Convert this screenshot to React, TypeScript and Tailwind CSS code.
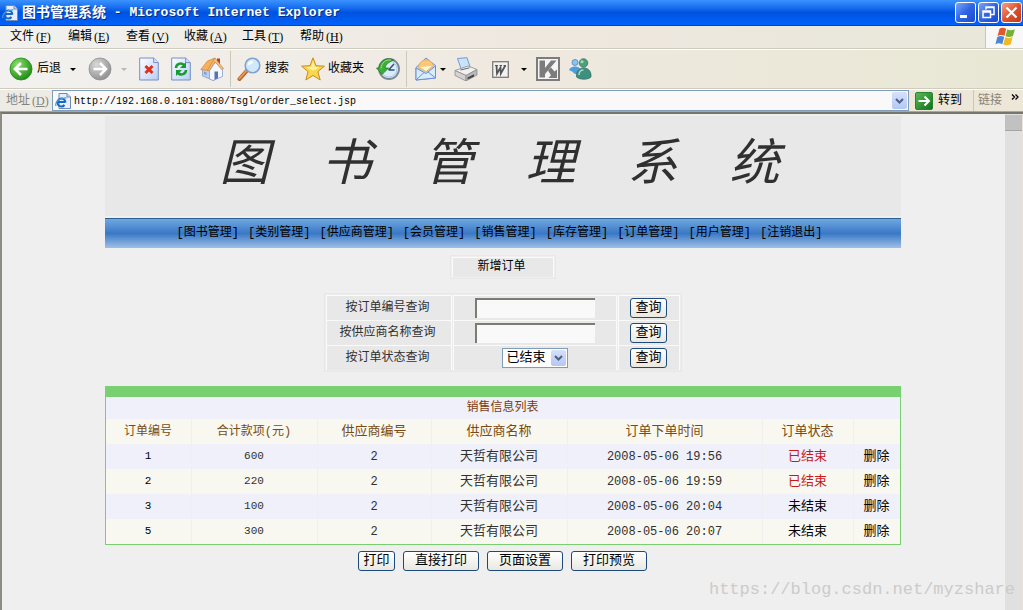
import type { ReactNode } from "react"

const MENUS = [
  ["文件", "F"],
  ["编辑", "E"],
  ["查看", "V"],
  ["收藏", "A"],
  ["工具", "T"],
  ["帮助", "H"],
]

const NAV = [
  "图书管理",
  "类别管理",
  "供应商管理",
  "会员管理",
  "销售管理",
  "库存管理",
  "订单管理",
  "用户管理",
  "注销退出",
]

type Order = {
  id: number
  total: number
  supplierId: number
  supplier: string
  time: string
  closed: boolean
}

const ORDERS: Order[] = [
  { id: 1, total: 600, supplierId: 2, supplier: "天哲有限公司", time: "2008-05-06 19:56", closed: true },
  { id: 2, total: 220, supplierId: 2, supplier: "天哲有限公司", time: "2008-05-06 19:59", closed: true },
  { id: 3, total: 100, supplierId: 2, supplier: "天哲有限公司", time: "2008-05-06 20:04", closed: false },
  { id: 5, total: 300, supplierId: 2, supplier: "天哲有限公司", time: "2008-05-06 20:07", closed: false },
]

export default function App() {
  return (
    <div className="min-h-screen flex flex-col bg-[#efefef] text-black text-xs font-['Liberation_Mono','Noto_Sans_CJK_SC',monospace]">
      <TitleBar />
      <MenuBar />
      <Toolbar />
      <AddressBar />
      <div className="flex-1 flex border-t-2 border-l-2 border-t-[#77756c] border-l-[#8d8b82]">
        <OrderPage />
        <div className="w-[17px] bg-[#e0e0e0]">
          <div className="h-4 mt-px bg-[#c1c1c1] border-b border-[#a5a5a5]" />
        </div>
        <div className="w-px bg-[#e9e2da]" />
      </div>
      <div className="absolute right-2 bottom-2 text-[17px] leading-6 text-[#cbcbcb]">
        https://blog.csdn.net/myzshare
      </div>
    </div>
  )
}

function TitleBar() {
  return (
    <header className="h-[26px] flex items-center pl-[2px] pr-px bg-linear-to-b from-[#3a93ff] via-[#0053e1] to-[#0062fb] border-b border-[#0a3fc0] text-white">
      <PageIcon />
      <h1 className="ml-1 flex-1 flex items-center font-bold text-[13px] whitespace-pre [text-shadow:1px_1px_0_#0a2a80]">
        <span className="text-sm">图书管理系统</span> - Microsoft Internet Explorer
      </h1>
      <div className="flex gap-[2px]">
        <WindowButton label="最小化">
          <path d="M4 13.500h7" stroke="#fff" strokeWidth="3" />
        </WindowButton>
        <WindowButton label="还原">
          <path d="M7 6.500V4h8v7.500h-3M7 4.500h8" fill="none" stroke="#fff" strokeWidth="1.500" />
          <path d="M4 8h7.500v6.500H4zM4 9h7.500" fill="none" stroke="#fff" strokeWidth="1.500" />
        </WindowButton>
        <WindowButton label="关闭" danger>
          <path d="M4.500 4.500l10 10M14.500 4.500l-10 10" stroke="#fff" strokeWidth="2.200" />
        </WindowButton>
      </div>
    </header>
  )
}

function WindowButton({ label, danger, children }: { label: string; danger?: boolean; children: ReactNode }) {
  const color = danger
    ? "bg-linear-to-br from-[#f0a088] via-[#e0532f] to-[#c03a14]"
    : "bg-linear-to-br from-[#7ba4f8] via-[#2f63e4] to-[#1c4bd0]"
  return (
    <button aria-label={label} className={`size-[21px] rounded-[3px] border border-white ${color}`}>
      <svg viewBox="0 0 19 19" className="size-[19px]">
        {children}
      </svg>
    </button>
  )
}

function MenuBar() {
  return (
    <nav className="h-[23px] flex bg-linear-to-r from-[#f1f1ee] via-[#efe8e0] to-[#e8e7da] border-b border-[#cfccbf]">
      <div className="flex-1 flex items-center pl-[10px]">
        {MENUS.map(([name, key]) => (
          <button key={key} className="w-[58px] flex items-center gap-[2px]">
            {name}
            <Hotkey letter={key} />
          </button>
        ))}
      </div>
      <div className="w-[38px] flex justify-center items-center bg-[#f8f8f8] border-l border-[#c9c7ba]">
        <WindowsFlag />
      </div>
    </nav>
  )
}

function Hotkey({ letter }: { letter: string }) {
  return (
    <span className="font-['Liberation_Serif',serif]">
      (<u>{letter}</u>)
    </span>
  )
}

function Toolbar() {
  return (
    <div className="h-10 flex items-center pl-[9px] bg-linear-to-r from-[#f2f1ef] via-[#efe9e0] to-[#e8e7d4] border-t border-t-white border-b border-b-[#cfccbf]">
      <button className="flex items-center gap-1">
        <ArrowCircle id="back" from="#8be06a" to="#1f8a16" />
        后退
      </button>
      <Caret className="ml-[9px] fill-black" />
      <button aria-label="前进" className="ml-3">
        <ArrowCircle id="forward" from="#d9d9d9" to="#8f8f8f" flip />
      </button>
      <Caret className="ml-[9px] fill-[#b8b8b8]" />
      <button aria-label="停止" className="ml-3">
        <Sheet id="stop">
          <path d="M6.500 9l7 7M13.500 9l-7 7" stroke="#e0301a" strokeWidth="3" />
        </Sheet>
      </button>
      <button aria-label="刷新" className="ml-3">
        <Sheet id="refresh">
          <path d="M5 11c0-4 5-6 8-3" fill="none" stroke="#189b30" strokeWidth="2.500" />
          <path d="M15 5v6H9z" fill="#189b30" />
          <path d="M15 13c0 4-5 6-8 3" fill="none" stroke="#189b30" strokeWidth="2.500" />
          <path d="M5 19v-6h6z" fill="#189b30" />
        </Sheet>
      </button>
      <button aria-label="主页" className="ml-[9px]">
        <HomeIcon />
      </button>
      <Divider className="ml-[6px]" />
      <button className="ml-[6px] flex items-center gap-1">
        <SearchIcon />
        搜索
      </button>
      <button className="ml-3 flex items-center gap-[3px]">
        <StarIcon />
        收藏夹
      </button>
      <button aria-label="历史" className="ml-3">
        <HistoryIcon />
      </button>
      <Divider className="ml-[6px]" />
      <button aria-label="邮件" className="ml-2">
        <MailIcon />
      </button>
      <Caret className="ml-[3px] fill-black" />
      <button aria-label="打印" className="ml-2">
        <PrinterIcon />
      </button>
      <button aria-label="编辑" className="ml-[14px]">
        <WordIcon />
      </button>
      <Caret className="ml-3 fill-black" />
      <button aria-label="卡巴斯基" className="ml-[9px]">
        <KasperskyIcon />
      </button>
      <button aria-label="Messenger" className="ml-2">
        <MessengerIcon />
      </button>
    </div>
  )
}

function AddressBar() {
  return (
    <div className="h-[23px] flex items-center pl-[6px] bg-linear-to-r from-[#ecebe6] to-[#ede7d8] border-t border-t-white border-b border-b-[#aaa89d]">
      <label htmlFor="address" className="w-[46px] flex items-center gap-[2px] text-[#85837a]">
        地址
        <Hotkey letter="D" />
      </label>
      <div className="flex-1 h-[21px] flex items-center pl-[2px] pr-px bg-[#f9f9f9] border border-[#7f9db9]">
        <PageIcon />
        <input
          id="address"
          defaultValue="http://192.168.0.101:8080/Tsgl/order_select.jsp"
          className="ml-[3px] pt-[2px] flex-1 min-w-0 bg-transparent text-[10px] outline-none"
        />
        <button aria-label="地址列表" className="w-[15px] h-[17px] flex items-center justify-center rounded-xs bg-linear-to-b from-[#d6e0fa] to-[#b4c7f4]">
          <Chevron />
        </button>
      </div>
      <button className="ml-[6px] flex items-center gap-[5px]">
        <svg viewBox="0 0 18 18" className="size-[18px]">
          <defs>
            <linearGradient id="go" x2="1" y2="1">
              <stop stopColor="#5fb95a" />
              <stop offset="1" stopColor="#0d7216" />
            </linearGradient>
          </defs>
          <rect x=".5" y=".5" width="17" height="17" rx="1.500" fill="url(#go)" stroke="#26852a" />
          <path d="M3.500 9h10M9.500 4.500L14 9l-4.500 4.500" fill="none" stroke="#fff" strokeWidth="2" />
        </svg>
        转到
      </button>
      <div className="ml-[11px] h-full w-[50px] flex items-center pl-1 border-l border-[#c9c7ba] text-[#85837a]">
        链接
        <svg viewBox="0 0 8 6" className="ml-[9px] mb-2 w-2 h-[6px]">
          <path d="M1 .5L3.500 3 1 5.500M4.500 .5L7 3 4.500 5.500" fill="none" stroke="#000" strokeWidth="1.300" />
        </svg>
      </div>
    </div>
  )
}

function OrderPage() {
  return (
    <main className="flex-1 pl-4 pr-[18px] pt-[2px] pb-8 flex flex-col items-center">
      <div className="w-full max-w-[796px]">
        <h2 className="h-[100px] pt-[2px] pr-[6px] flex items-center justify-center gap-[52px] bg-[#e8e8e8] text-[50px] leading-none font-normal italic text-[#303030]">
          {[..."图书管理系统"].map((char) => (
            <span key={char}>{char}</span>
          ))}
        </h2>
        <nav className="mt-[2px] h-[30px] pr-[6px] pb-[2px] flex items-center justify-center gap-[9px] border-t border-[#2c5f96] bg-linear-to-b from-[#6fa8df] via-[#3a78c6] to-[#9fc0e4]">
          {NAV.map((item) => (
            <a key={item} href="#">
              [{item}]
            </a>
          ))}
        </nav>
      </div>

      <div className="mt-[7px] w-[106px] h-6 p-px border border-[#e8e8e8]">
        <a href="#" className="h-full pr-[2px] pb-[2px] flex items-center justify-center border border-b-0 border-[#fafafa] bg-[#e8e8e8]">
          新增订单
        </a>
      </div>

      <div className="mt-[14px] w-[358px] p-px border border-[#e8e8e8] bg-[#ececec] text-[#303030]">
        <SearchRow id="order-id" label="按订单编号查询">
          <input id="order-id" className={FIELD} />
        </SearchRow>
        <SearchRow id="supplier" label="按供应商名称查询">
          <input id="supplier" className={FIELD} />
        </SearchRow>
        <SearchRow id="status" label="按订单状态查询">
          <div className="relative flex">
            <select id="status" className="appearance-none w-[66px] h-5 pl-1 bg-white border border-[#7f9db9] text-[13px] leading-4 text-black outline-none">
              <option>已结束</option>
              <option>未结束</option>
            </select>
            <span className="absolute right-[2px] top-[2px] w-[15px] h-4 flex items-center justify-center rounded-xs bg-linear-to-b from-[#d6e0fa] to-[#b4c7f4] pointer-events-none">
              <Chevron />
            </span>
          </div>
        </SearchRow>
      </div>

      <table className="mt-[14px] w-full max-w-[796px] table-fixed border-separate border-spacing-0 border border-t-[11px] border-[#78d070] text-center text-[13px] text-[#303030]">
        <colgroup>
          <col className="w-[86px]" />
          <col className="w-[126px]" />
          <col className="w-[114px]" />
          <col className="w-[136px]" />
          <col className="w-[195px]" />
          <col className="w-[91px]" />
          <col />
        </colgroup>
        <thead className="text-[#7a4a12]">
          <tr className="h-[22px] bg-[#eff0f9]">
            <th colSpan={7} className="p-0 text-xs font-normal text-[#7b3c12]">
              销售信息列表
            </th>
          </tr>
          <tr className="h-[25px] bg-[#f8f8f0]">
            <Head small>订单编号</Head>
            <Head small>合计款项(元)</Head>
            <Head>供应商编号</Head>
            <Head>供应商名称</Head>
            <Head>订单下单时间</Head>
            <Head>订单状态</Head>
            <td />
          </tr>
        </thead>
        <tbody>
          {ORDERS.map((order) => (
            <tr key={order.id} className="h-[25px] odd:bg-[#eff0f9] even:bg-[#f8f8f0]">
              <td className={`${CELL} text-[11px] text-black`}>{order.id}</td>
              <td className={`${CELL} text-[11px]`}>{order.total}</td>
              <td className={`${CELL} text-xs`}>{order.supplierId}</td>
              <td className={CELL}>{order.supplier}</td>
              <td className={`${CELL} text-xs`}>{order.time}</td>
              <td className={`${CELL} ${order.closed ? "text-[#c81818]" : "text-black"}`}>
                {order.closed ? "已结束" : "未结束"}
              </td>
              <td className="p-0 text-black">
                <a href="#">删除</a>
              </td>
            </tr>
          ))}
        </tbody>
      </table>

      <div className="mt-[6px] flex gap-2">
        <XpButton>打印</XpButton>
        <XpButton wide>直接打印</XpButton>
        <XpButton wide>页面设置</XpButton>
        <XpButton wide>打印预览</XpButton>
      </div>
    </main>
  )
}

const FIELD =
  "w-[120px] h-5 px-1 bg-[#f9f9f9] border-t-2 border-l-2 border-[#7d7b73] text-black outline-none"

const CELL = "p-0 border-r border-[#efeff0]"

const SEARCH_CELL = "flex items-center justify-center bg-[#e8e8e8] border border-b-0 border-[#fafafa]"

function SearchRow({ id, label, children }: { id: string; label: string; children: ReactNode }) {
  return (
    <div className="h-[25px] flex gap-px">
      <label htmlFor={id} className={`${SEARCH_CELL} w-[126px] pr-[2px]`}>
        {label}
      </label>
      <div className={`${SEARCH_CELL} flex-1`}>{children}</div>
      <div className={`${SEARCH_CELL} w-[62px]`}>
        <XpButton>查询</XpButton>
      </div>
    </div>
  )
}

function Head({ small, children }: { small?: boolean; children: ReactNode }) {
  return <th className={`${CELL} font-normal ${small ? "text-xs" : ""}`}>{children}</th>
}

function XpButton({ wide, children }: { wide?: boolean; children: ReactNode }) {
  return (
    <button
      className={`${wide ? "w-[76px]" : "w-[37px]"} h-5 flex items-center justify-center rounded-[3px] border border-[#1d4a7a] bg-linear-to-b from-white to-[#e9e8e0] text-[13px] leading-4 text-black`}
    >
      {children}
    </button>
  )
}

function Divider({ className }: { className: string }) {
  return <div className={`w-px h-9 bg-[#cdc8b8] ${className}`} />
}

function Caret({ className }: { className: string }) {
  return (
    <svg viewBox="0 0 6 3" className={`w-[6px] h-[3px] ${className}`}>
      <path d="M0 0h6L3 3z" />
    </svg>
  )
}

function Chevron() {
  return (
    <svg viewBox="0 0 9 6" className="w-[9px] h-[6px]">
      <path d="M1 1l3.500 3.500L8 1" fill="none" stroke="#4d6185" strokeWidth="2" />
    </svg>
  )
}

function PageIcon() {
  return (
    <svg viewBox="0 0 16 16" className="size-4">
      <path d="M4 .5h8L15.500 4v11.500H4z" fill="#e6edfb" stroke="#6f88ba" />
      <path d="M12 .5V4h3.500" fill="#c9d5ee" stroke="#6f88ba" />
      <path d="M3 9h7.500M10.400 9.500A4 4 0 1 0 9.500 12" fill="none" stroke="#1668c8" strokeWidth="2" />
      <path d="M1 13C-.5 9 5 4.500 11.500 4.800" fill="none" stroke="#3f9be6" strokeWidth="1.200" />
    </svg>
  )
}

function WindowsFlag() {
  return (
    <svg viewBox="0 0 20 20" className="size-[22px]">
      <path d="M5 2.500c2-1.200 3.800-1 6 .1L9.500 9C7.500 8 5.500 8 3.200 9z" fill="#e2582c" />
      <path d="M12 3.200c2.500 1 4.500.9 7-.3L17.200 9c-2.300 1.200-4.400 1.200-6.700.3z" fill="#74b230" />
      <path d="M3 10c2.200-1.200 4.300-1 6.300 0l-1.800 6.500c-2-1.200-4-1.200-6.200 0z" fill="#4a86d8" />
      <path d="M10.200 10.300c2.400 1 4.500 1 6.700-.2l-1.700 6.400c-2.300 1.300-4.500 1.200-6.800.3z" fill="#f2b822" />
    </svg>
  )
}

function ArrowCircle({ id, from, to, flip }: { id: string; from: string; to: string; flip?: boolean }) {
  return (
    <svg viewBox="0 0 24 24" className="size-6">
      <defs>
        <radialGradient id={id} cx=".35" cy=".3" r=".75">
          <stop stopColor={from} />
          <stop offset="1" stopColor={to} />
        </radialGradient>
      </defs>
      <circle cx="12" cy="12" r="11" fill={`url(#${id})`} stroke={to} strokeWidth=".8" />
      <path
        d={flip ? "M5.500 12h12M12 6l6 6-6 6" : "M18.500 12h-12M12 6l-6 6 6 6"}
        fill="none"
        stroke="#fff"
        strokeWidth="2.600"
      />
    </svg>
  )
}

function Sheet({ id, children }: { id: string; children: ReactNode }) {
  return (
    <svg viewBox="0 0 20 24" className="w-5 h-6">
      <defs>
        <linearGradient id={id} x2="1" y2="1">
          <stop stopColor="#fff" />
          <stop offset="1" stopColor="#b7cdf6" />
        </linearGradient>
      </defs>
      <path d="M.7 1h14l4.600 4.600V23H.7z" fill={`url(#${id})`} stroke="#7590c4" />
      <path d="M14.700 1v4.600h4.600" fill="#d5e1fa" stroke="#7590c4" />
      {children}
    </svg>
  )
}

function HomeIcon() {
  return (
    <svg viewBox="0 0 24 24" className="size-6">
      <path d="M17 1.500h3V8h-3z" fill="#b3412c" />
      <path d="M2.500 12.500L10 9l4 5v9.500L2.500 19z" fill="#b9cff2" stroke="#7b93c2" strokeWidth=".7" />
      <path d="M9.500 13.500L15.500 5l7 8v6.500L13 23.500 9.500 22z" fill="#f3f7ff" stroke="#7b93c2" strokeWidth=".7" />
      <path d="M.8 12.500L7.500 4 15 1 8 13.500z" fill="#f8b05a" stroke="#d9822b" strokeWidth=".7" />
      <path d="M15 1l8.500 10.500-1.500 1.200-7-8-6 9.300-1.500-.8z" fill="#f6c285" stroke="#c8772d" strokeWidth=".6" />
      <path d="M14.500 14.500h3.500v6.800l-3.500 1.500z" fill="#5773b5" />
      <path d="M4 14.500l2.500 1v2.500L4 17z" fill="#7f9bd2" />
    </svg>
  )
}

function SearchIcon() {
  return (
    <svg viewBox="0 0 24 24" className="size-6">
      <path d="M2.500 22L10 13.500" stroke="#b9622a" strokeWidth="4" strokeLinecap="round" />
      <path d="M2.500 21.500L9.500 13.500" stroke="#ef9a55" strokeWidth="1.800" strokeLinecap="round" />
      <circle cx="15.500" cy="8.500" r="7.300" fill="#cfe8fb" stroke="#7fa3d1" strokeWidth="1.600" />
      <path d="M10.500 8c.5-3 3-4.600 6-4.200-1 3-3 4-6 4.200z" fill="#fff" />
    </svg>
  )
}

function StarIcon() {
  return (
    <svg viewBox="0 0 24 24" className="size-6">
      <path
        d="M12 .8l3 7.900 8.400.5-6.500 5.400 2.300 8.400L12 18.400 4.800 23l2.300-8.400L.6 9.200 9 8.700z"
        fill="#fbd74c"
        stroke="#c98a1c"
      />
      <path d="M12 4l1.800 6 5 .5-6.800 3-6.500-3.300 4.800-.3z" fill="#fff2a6" />
    </svg>
  )
}

function HistoryIcon() {
  return (
    <svg viewBox="0 0 24 24" className="size-6">
      <circle cx="13" cy="12" r="10" fill="#dcebf8" stroke="#7b8794" strokeWidth="1.800" />
      <circle cx="13" cy="12" r="8" fill="none" stroke="#a9cbe8" />
      <path d="M12.500 13l5.500-6M12.500 13h6" stroke="#33507a" strokeWidth="1.500" />
      <path d="M17.500 3C10-.5 3.500 4.500 3 11H.5l5.500 6.500 6.500-6.500H9c.3-3 3-5.500 8.500-8z" fill="#3fae37" stroke="#1d7a1d" strokeWidth=".8" />
      <path d="M15 3.200C10 2 5.500 5.500 5 11.500" fill="none" stroke="#9be07f" />
    </svg>
  )
}

function MailIcon() {
  return (
    <svg viewBox="0 0 22 24" className="w-[22px] h-6">
      <path d="M1 10.500L11 1l9.500 7.500V21L1 23z" fill="#bcdcfa" stroke="#6e8fd0" />
      <path d="M3 10.500C4 6 7 3 11 3s6.500 2.500 7.500 6L11 15z" fill="#fbc873" stroke="#e0a860" strokeWidth=".7" />
      <path d="M5 10l12-1-6 5z" fill="#fff4d8" />
      <path d="M1 11l10 5.500L20.500 9v12L1 23z" fill="#d7ecfd" stroke="#6e8fd0" />
      <path d="M1 23l8-7.500M20.500 21L13 15" stroke="#6e8fd0" />
    </svg>
  )
}

function PrinterIcon() {
  return (
    <svg viewBox="0 0 24 24" className="size-6">
      <path d="M3.500 1.500L13 .7l3.500 10.500-9 1.800z" fill="#c8e3fb" stroke="#6f9cd0" />
      <path d="M1 13.500l13-4.500 9 3.500-11 6z" fill="#f0f0f0" stroke="#8d8d8d" strokeWidth=".8" />
      <path d="M1 13.500l11 5V24L1 18.500z" fill="#d3d3d3" stroke="#8d8d8d" strokeWidth=".8" />
      <path d="M12 18.500l11-6v5.500L12 24z" fill="#b8b8b8" stroke="#8d8d8d" strokeWidth=".8" />
      <path d="M13.500 20.500l6.500-3.300v2.300l-6.500 3z" fill="#444" />
      <path d="M6.500 13l9-2.200" stroke="#666" />
    </svg>
  )
}

function WordIcon() {
  return (
    <svg viewBox="0 0 17 17" className="size-[17px]">
      <rect x=".7" y=".7" width="15.600" height="15.600" fill="#f2f2f2" stroke="#7b7b7b" strokeWidth="1.300" />
      <path d="M4.500 4.500l.5 8 3.500-6 .3 6 4.500-8" fill="none" stroke="#555" strokeWidth="1.800" />
      <path d="M3 4.500h3M7.500 4.500h2.500M11.500 4.500H14" stroke="#555" />
    </svg>
  )
}

function KasperskyIcon() {
  return (
    <svg viewBox="0 0 24 24" className="size-6">
      <rect width="24" height="24" fill="#7c7c7c" />
      <rect x="2" y="2" width="20" height="20" fill="#f4f4f4" />
      <path d="M3.500 3.500H9v17H3.500z" fill="#7c7c7c" />
      <path d="M15 3.500h5.500L9 17v-6z" fill="#7c7c7c" />
      <path d="M12 13.500l3-3 3.500 4 2.500-2v8.500h-8.500l2.500-2.800z" fill="#7c7c7c" />
    </svg>
  )
}

function MessengerIcon() {
  return (
    <svg viewBox="0 0 24 24" className="size-6">
      <circle cx="7" cy="5.500" r="3" fill="#8cc4f0" stroke="#3d7ab8" strokeWidth=".7" />
      <path d="M1 13c1.500-4.500 10-5 12 0l-2 4c-4 0-5 0-6-2z" fill="#4c9fdb" />
      <circle cx="15.500" cy="6" r="4.300" fill="#4f9f7c" stroke="#2d6c62" strokeWidth=".7" />
      <path d="M8.500 20c-.5-6 3-9 7.500-9s7.500 3.500 7 9c-3 3-11 3-14.500 0z" fill="#3f8f80" stroke="#2d6c62" strokeWidth=".7" />
      <path d="M11 18c0-3 1.500-5 4.500-5" fill="none" stroke="#a5dcbc" strokeWidth="1.500" />
      <circle cx="14" cy="4.800" r="1.500" fill="#a5dcbc" />
    </svg>
  )
}
